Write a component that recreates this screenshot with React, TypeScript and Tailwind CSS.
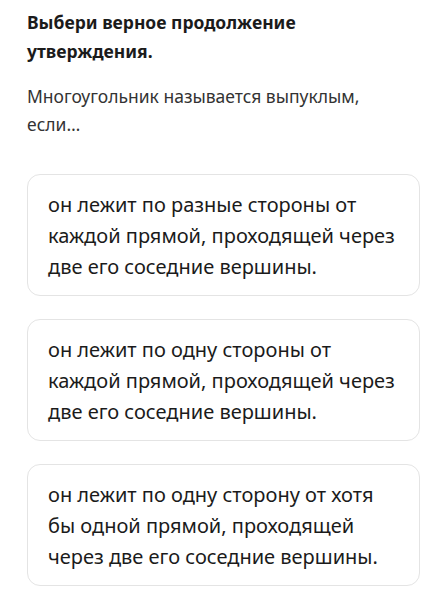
const options = [
  "он лежит по разные стороны от каждой прямой, проходящей через две его соседние вершины.",
  "он лежит по одну стороны от каждой прямой, проходящей через две его соседние вершины.",
  "он лежит по одну сторону от хотя бы одной прямой, проходящей через две его соседние вершины.",
];

export default function App() {
  return (
    <div className="min-h-screen bg-white px-[27px] pt-[8px] font-['Noto_Sans',sans-serif] text-[#1b1b1b]">
      <h1 className="pr-[40px] text-[17.5px] font-bold leading-[29px]">
        Выбери верное продолжение утверждения.
      </h1>
      <p className="mt-[16px] pr-[30px] text-[17.5px] leading-[28px] text-[#333]">
        Многоугольник называется выпуклым, если…
      </p>
      <div className="mt-[36px] flex flex-col gap-[23px]">
        {options.map((text) => (
          <button
            key={text}
            type="button"
            className="rounded-[13px] border border-[#e4e4e4] bg-white px-[20px] pt-[14px] pb-[13px] text-left text-[20px] leading-[31px] text-[#1b1b1b]"
          >
            {text}
          </button>
        ))}
      </div>
    </div>
  );
}
